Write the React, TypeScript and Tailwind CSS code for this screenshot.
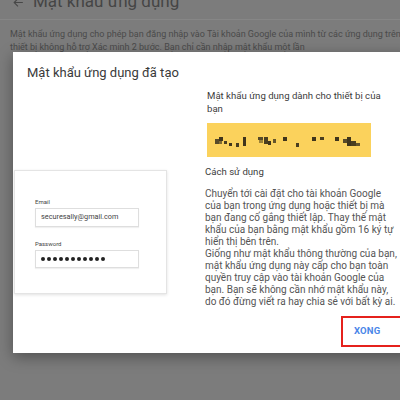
import React from 'react'

// blurred password blocks, coords relative to the yellow box
const BLOCKS: [number, number, number, number, string][] = [
  [8, 16, 4, 5, '#3a3320'],
  [12, 14, 4, 4, '#1f1a10'],
  [12, 18, 3, 3, '#6b5a2a'],
  [17, 18, 3, 3, '#2a2415'],
  [22, 20, 3, 3, '#1f1a10'],
  [29, 20, 3, 4, '#2a2415'],
  [36, 14, 3, 9, '#1f1a10'],
  [51, 14, 5, 3, '#3a3320'],
  [52, 17, 4, 3, '#8a7330'],
  [57, 14, 4, 7, '#2a2415'],
  [61, 18, 3, 4, '#1f1a10'],
  [66, 16, 3, 4, '#4a3f22'],
  [76, 14, 4, 4, '#1f1a10'],
  [89, 20, 3, 4, '#2a2415'],
  [105, 14, 4, 4, '#1f1a10'],
  [113, 14, 4, 3, '#2a2415'],
  [128, 14, 4, 4, '#1f1a10'],
  [136, 16, 4, 4, '#3a3320'],
  [140, 14, 4, 9, '#1f1a10'],
  [144, 18, 5, 5, '#2a2415'],
  [149, 20, 4, 3, '#4a3f22'],
]

const GUIDE_LINES = [
  'Chuyển tới cài đặt cho tài khoản Google',
  'của bạn trong ứng dụng hoặc thiết bị mà',
  'bạn đang cố gắng thiết lập. Thay thế mật',
  'khẩu của bạn bằng mật khẩu gồm 16 ký tự',
  'hiển thị bên trên.',
  'Giống như mật khẩu thông thường của bạn,',
  'mật khẩu ứng dụng này cấp cho bạn toàn',
  'quyền truy cập vào tài khoản Google của',
  'bạn. Bạn sẽ không cần nhớ mật khẩu này,',
  'do đó đừng viết ra hay chia sẻ với bất kỳ ai.',
]

export default function App() {
  return (
    <div className="relative w-[400px] h-[400px] overflow-hidden bg-[#7c7c7c] font-['Roboto',sans-serif]">
      {/* trang phía sau lớp phủ */}
      <div className="h-[20px] border-b border-[#868686] flex items-start pl-[12px] gap-[8px]">
        <svg className="w-[13px] h-[13px] -mt-[4px] text-[#474747]" viewBox="0 0 24 24" fill="none" stroke="currentColor" strokeWidth={2}>
          <path d="M20 12H5m6-7l-7 7 7 7" />
        </svg>
        <div className="-mt-[7px] text-[17px] leading-[17px] text-[#454545] whitespace-nowrap">Mật khẩu ứng dụng</div>
      </div>
      <div className="w-[400px] overflow-hidden pl-[10px] pt-[8px] text-[9px] leading-[13px] text-[#4a4a4a] whitespace-nowrap">
        <div>Mật khẩu ứng dụng cho phép bạn đăng nhập vào Tài khoản Google của mình từ các ứng dụng trên các</div>
        <div>thiết bị không hỗ trợ Xác minh 2 bước. Bạn chỉ cần nhập mật khẩu một lần</div>
      </div>

      {/* hộp thoại */}
      <div className="absolute left-[13px] top-[52px] w-[400px] h-[301px] bg-white shadow-[0_4px_14px_rgba(0,0,0,0.35)] flex flex-col overflow-hidden">
        <div className="h-[31px] pt-[12px] pl-[14px] text-[13px] leading-[18px] text-[#3a3a3a]">Mật khẩu ứng dụng đã tạo</div>
        <div className="flex">
          <div className="w-[192px] shrink-0">
            <div className="mt-[87px] ml-[1px] w-[153px] h-[124px] border border-[#e4e4e4] shadow-[0_1px_3px_rgba(0,0,0,0.12)] pl-[20px] pt-[27px]">
              <div className="text-[6px] leading-[7px] text-[#444]">Email</div>
              <div className="mt-[3px] w-[104px] h-[19px] border border-[#dedede] shadow-[0_1px_1px_rgba(0,0,0,0.06)] flex items-center pl-[5px] text-[7.3px] text-[#444] whitespace-nowrap">
                securesally@gmail.com
              </div>
              <div className="mt-[13px] text-[6px] leading-[7px] text-[#444]">Password</div>
              <div className="mt-[3px] w-[104px] h-[18px] border border-[#dedede] shadow-[0_1px_1px_rgba(0,0,0,0.06)] flex items-center gap-[2px] pl-[5px]">
                {Array.from({ length: 11 }).map((_, i) => (
                  <span key={i} className="w-[4px] h-[4px] rounded-full bg-[#222]" />
                ))}
              </div>
            </div>
          </div>

          <div className="w-[200px] shrink-0 flex flex-col">
            <div className="mt-[6px] pl-[2px] w-[180px] text-[9.6px] leading-[13px] text-[#3c3c3c]">
              Mật khẩu ứng dụng dành cho thiết bị của bạn
            </div>
            <div className="mt-[8px] ml-[2px] w-[164px] h-[34px] bg-[#fbd25c]">
              <svg width="164" height="34" viewBox="0 0 164 34">
                {BLOCKS.map(([x, y, w, h, c], i) => (
                  <rect key={i} x={x} y={y} width={w} height={h} fill={c} opacity={0.85} />
                ))}
              </svg>
            </div>
            <div className="mt-[8px] text-[9.6px] leading-[13px] text-[#3c3c3c]">Cách sử dụng</div>
            <div className="mt-[10px] text-[10px] leading-[12px] text-[#555] whitespace-nowrap">
              {GUIDE_LINES.map((l) => (
                <div key={l}>{l}</div>
              ))}
            </div>
            <div className="mt-[8px] ml-[136px] w-[80px] h-[31px] border-2 border-[#e5211c] flex items-center pl-[11px]">
              <span className="text-[9.5px] font-bold tracking-[0.2px] text-[#4a86e8]">XONG</span>
            </div>
          </div>
        </div>
      </div>
    </div>
  )
}
